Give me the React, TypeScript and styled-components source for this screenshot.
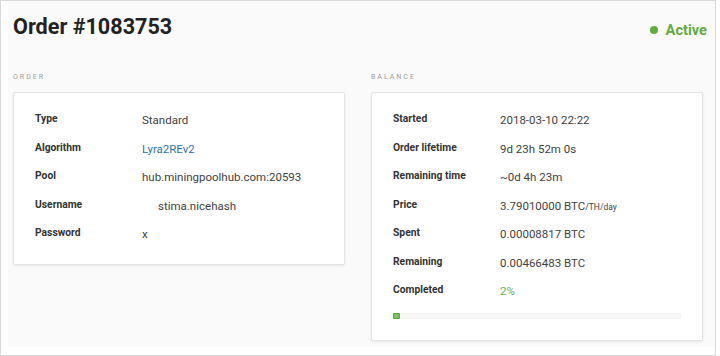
import React from "react";
import styled, { createGlobalStyle } from "styled-components";

type Row = { label: string; value: React.ReactNode; indent?: boolean };

const GlobalStyle = createGlobalStyle`
  html, body {
    margin: 0;
    padding: 0;
    background: #ffffff;
    font-family: Roboto, "Liberation Sans", Arial, sans-serif;
  }
`;

export default function App() {
  const completed = 2;

  const orderRows: Row[] = [
    { label: "Type", value: "Standard" },
    { label: "Algorithm", value: <Link>Lyra2REv2</Link> },
    { label: "Pool", value: "hub.miningpoolhub.com:20593" },
    { label: "Username", value: "stima.nicehash", indent: true },
    { label: "Password", value: "x" },
  ];

  const balanceRows: Row[] = [
    { label: "Started", value: "2018-03-10 22:22" },
    { label: "Order lifetime", value: "9d 23h 52m 0s" },
    { label: "Remaining time", value: "~0d 4h 23m" },
    {
      label: "Price",
      value: (
        <>
          3.79010000 BTC<Unit>/TH/day</Unit>
        </>
      ),
    },
    { label: "Spent", value: "0.00008817 BTC" },
    { label: "Remaining", value: "0.00466483 BTC" },
    { label: "Completed", value: <Percent>{completed}%</Percent> },
  ];

  return (
    <>
      <GlobalStyle />
      <Frame>
        <Panel>
          <Header>
            <Title>Order #1083753</Title>
            <Status>
              <Dot />
              Active
            </Status>
          </Header>

          <Columns>
            <Section>
              <SectionLabel>Order</SectionLabel>
              <Card $bottom={9}>
                {orderRows.map((r) => (
                  <InfoRow key={r.label}>
                    <Label>{r.label}</Label>
                    <Value $indent={r.indent}>{r.value}</Value>
                  </InfoRow>
                ))}
              </Card>
            </Section>

            <Section>
              <SectionLabel>Balance</SectionLabel>
              <Card $bottom={21}>
                {balanceRows.map((r) => (
                  <InfoRow key={r.label}>
                    <Label>{r.label}</Label>
                    <Value>{r.value}</Value>
                  </InfoRow>
                ))}
                <Progress>
                  <ProgressFill style={{ width: `${completed}%` }} />
                </Progress>
              </Card>
            </Section>
          </Columns>
        </Panel>
      </Frame>
    </>
  );
}

const Frame = styled.div`
  width: 716px;
  height: 356px;
  box-sizing: border-box;
  border: 1px solid #d9d9d9;
  background: #ffffff;
`;

const Panel = styled.div`
  height: 346px;
  margin-left: 7px;
  box-sizing: border-box;
  background: #fafafa;
  padding: 13px 12px 0 5px;
`;

const Header = styled.div`
  display: flex;
  justify-content: space-between;
  align-items: baseline;
  margin-right: -4px;
`;

const Title = styled.h1`
  margin: 0;
  font-size: 21.6px;
  line-height: 26px;
  font-weight: 700;
  color: #222222;
`;

const Status = styled.div`
  display: flex;
  align-items: center;
  gap: 8px;
  font-size: 14.6px;
  font-weight: 700;
  color: #5fac3e;
`;

const Dot = styled.span`
  width: 8px;
  height: 8px;
  border-radius: 50%;
  background: #5fac3e;
`;

const Columns = styled.div`
  display: grid;
  grid-template-columns: 1fr 1fr;
  gap: 26px;
  margin-top: 32px;
  align-items: start;
`;

const Section = styled.div`
  display: flex;
  flex-direction: column;
`;

const SectionLabel = styled.div`
  font-size: 7px;
  line-height: 10px;
  letter-spacing: 2px;
  text-transform: uppercase;
  color: #9a9a9a;
  margin-bottom: 10px;
`;

const Card = styled.div<{ $bottom: number }>`
  background: #ffffff;
  border: 1px solid #e4e4e4;
  border-radius: 2px;
  box-shadow: 0 1px 3px rgba(0, 0, 0, 0.08);
  padding: 19px 21px ${({ $bottom }) => $bottom}px;
`;

const InfoRow = styled.div`
  display: grid;
  grid-template-columns: 107px 1fr;
  height: 28.5px;
  align-items: start;
`;

const Label = styled.div`
  font-size: 10.3px;
  line-height: 14px;
  font-weight: 700;
  color: #333333;
`;

const Value = styled.div<{ $indent?: boolean }>`
  font-size: 11.5px;
  line-height: 14px;
  margin-top: 1px;
  color: #3f3f3f;
  padding-left: ${({ $indent }) => ($indent ? "16px" : "0")};
`;

const Link = styled.span`
  color: #2d72a9;
`;

const Unit = styled.span`
  font-size: 8.5px;
`;

const Percent = styled.span`
  color: #6ab04c;
`;

const Progress = styled.div`
  height: 6px;
  margin-top: 1.5px;
  background: #f5f5f5;
  border-radius: 1px;
`;

const ProgressFill = styled.div`
  box-sizing: border-box;
  min-width: 7px;
  height: 6px;
  border: 1px solid #5aa33c;
  background: #7cc35c;
  border-radius: 1px;
`;
